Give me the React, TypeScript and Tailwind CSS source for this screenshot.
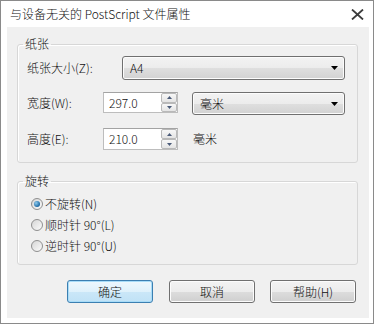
import type { ReactNode } from 'react';

const FONT = { fontFamily: '"Noto Sans CJK SC", "Noto Sans", sans-serif' };

// Win7 风格的下拉框
function Combo({ value, className }: { value: string; className: string }) {
  return (
    <div
      className={`flex items-center justify-between rounded-[3px] border border-[#707070] bg-[linear-gradient(#f3f3f3,#ececec_50%,#dfdfdf_50%,#d2d2d2)] pl-[7px] pr-[5px] shadow-[inset_0_0_0_1px_#fcfcfc] ${className}`}
    >
      <span className="text-[12px] leading-none">{value}</span>
      <svg width="7" height="4" viewBox="0 0 7 4" className="mr-[1px]">
        <path d="M0 0H7L3.5 4Z" fill="#000" />
      </svg>
    </div>
  );
}

function SpinButton({ up }: { up?: boolean }) {
  return (
    <div className="flex flex-1 items-center justify-center rounded-[2px] border border-[#b9b9b9] bg-[linear-gradient(#f7f7f7,#e4e4e4)]">
      <svg width="5" height="3" viewBox="0 0 5 3">
        <path d={up ? 'M0 3H5L2.5 0Z' : 'M0 0H5L2.5 3Z'} fill="#4a5a78" />
      </svg>
    </div>
  );
}

function SpinBox({ value, className }: { value: string; className: string }) {
  return (
    <div className={`flex w-[75px] border border-[#bdbdbd] border-t-[#a3a3a3] bg-white ${className}`}>
      <div className="flex flex-1 items-center pl-[5px] text-[12px] leading-none">{value}</div>
      <div className="flex w-[16px] flex-col">
        <SpinButton up />
        <SpinButton />
      </div>
    </div>
  );
}

function Radio({ checked, label }: { checked?: boolean; label: string }) {
  return (
    <div className="flex h-[21px] items-center">
      <span className="ml-[1px] flex h-[12px] w-[12px] items-center justify-center rounded-full border border-[#8f8f8f] bg-[linear-gradient(135deg,#d6d6d6,#fbfbfb)]">
        {checked && (
          <span className="h-[6px] w-[6px] rounded-full bg-[radial-gradient(circle_at_35%_35%,#8fcbee,#1d6aa5_70%,#164a78)]" />
        )}
      </span>
      <span className="ml-[2px] text-[12px] leading-none">{label}</span>
    </div>
  );
}

function Group({ title, children, className }: { title: string; children: ReactNode; className: string }) {
  return (
    <fieldset
      className={`ml-[10px] w-[341px] rounded-[3px] border border-[#d7d7d7] shadow-[inset_1px_1px_0_#fff] ${className}`}
    >
      <legend className="ml-[5px] px-[2px] text-[12px] leading-[16px]">{title}</legend>
      {children}
    </fieldset>
  );
}

function DialogButton({ label, primary }: { label: string; primary?: boolean }) {
  return (
    <button
      className={`flex h-[23px] w-[86px] items-center justify-center rounded-[3px] border text-[12px] leading-none ${
        primary
          ? 'border-[#3c7fb1] bg-[linear-gradient(#eef8fd,#dff1fb_50%,#cbe7f8_50%,#c0e2f6)] shadow-[inset_0_0_0_1px_#a8dcf8]'
          : 'border-[#707070] bg-[linear-gradient(#f3f3f3,#ececec_50%,#dddddd_50%,#cfcfcf)] shadow-[inset_0_0_0_1px_#fcfcfc]'
      }`}
    >
      {label}
    </button>
  );
}

export default function App() {
  return (
    <div
      className="flex h-[324px] w-[374px] flex-col border border-[#8a8a8a] bg-white font-light text-[#111]"
      style={FONT}
    >
      {/* 标题栏 */}
      <div className="flex h-[26px] items-center justify-between pl-[9px] pr-[9px]">
        <span className="text-[12px] leading-none">与设备无关的 PostScript 文件属性</span>
        <svg width="13" height="11" viewBox="0 0 13 11">
          <path d="M1 0.5L12 10.5M12 0.5L1 10.5" stroke="#3c3c3c" strokeWidth="1.8" />
        </svg>
      </div>

      <div className="ml-[6px] flex h-[291px] w-[362px] flex-col bg-[#f0f0f0]">
        <Group title="纸张" className="mt-[9px]">
          <div className="pl-[9px] pb-[12px]">
            <div className="mt-[4px] flex h-[24px] items-center">
              <span className="w-[95px] text-[12px] leading-none">纸张大小(Z):</span>
              <Combo value="A4" className="h-[24px] w-[223px]" />
            </div>
            <div className="mt-[12px] flex h-[23px] items-start">
              <span className="flex h-[21px] w-[76px] items-center text-[12px] leading-none">宽度(W):</span>
              <SpinBox value="297.0" className="h-[21px]" />
              <Combo value="毫米" className="ml-[14px] h-[23px] w-[153px]" />
            </div>
            <div className="mt-[13px] flex h-[22px] items-center">
              <span className="w-[76px] text-[12px] leading-none">高度(E):</span>
              <SpinBox value="210.0" className="h-[22px]" />
              <span className="ml-[15px] text-[12px] leading-none">毫米</span>
            </div>
          </div>
        </Group>

        <Group title="旋转" className="mt-[10px]">
          <div className="flex flex-col pl-[12px] pt-[4px] pb-[8px]">
            <Radio checked label="不旋转(N)" />
            <Radio label="顺时针 90°(L)" />
            <Radio label="逆时针 90°(U)" />
          </div>
        </Group>

        <div className="mt-[15px] flex pl-[60px]">
          <DialogButton primary label="确定" />
          <div className="ml-[16px]">
            <DialogButton label="取消" />
          </div>
          <div className="ml-[15px]">
            <DialogButton label="帮助(H)" />
          </div>
        </div>
      </div>
    </div>
  );
}
